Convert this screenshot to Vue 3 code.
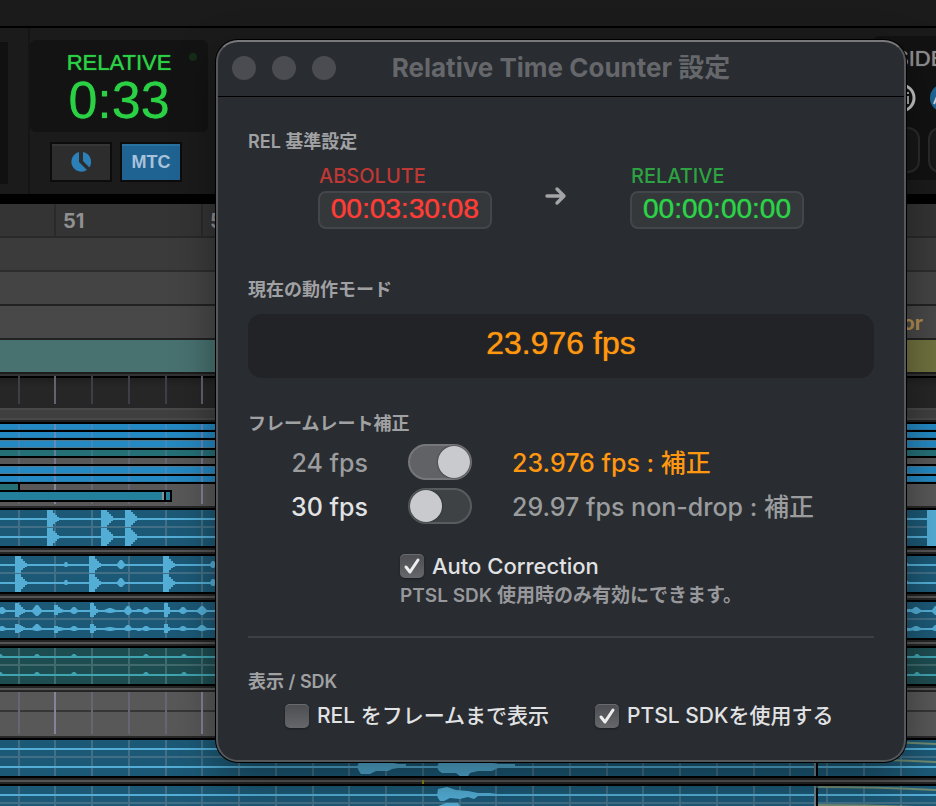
<script setup>
import { ref } from 'vue'

const absolute = ref('00:03:30:08')
const relative = ref('00:00:00:00')
const fix24 = ref(true)
const fix30 = ref(false)
const autoCorrection = ref(true)
const showFrames = ref(false)
const useSdk = ref(true)

// Beat positions across the timeline; every fourth one starts a bar.
const beats = Array.from({ length: 26 }, (_, i) => ({
  x: 18 + Math.floor(i * 36.75),
  bar: i % 4 === 1
}))

// Stepped outline of a hit: `hold` pixels at full level, then a decay to the right.
function hit(x, cy, up, down, hold, len) {
  const top = []
  const bottom = []
  for (let i = 0; i <= len; i += 2) {
    const t = i < hold ? 1 : Math.pow(1 - (i - hold) / (len - hold + 1), 1.5)
    const u = Math.round(up * t)
    const d = Math.round(down * t)
    top.push(`L${x + i} ${cy - u}H${x + i + 2}`)
    bottom.unshift(`L${x + i + 2} ${cy + d}H${x + i}`)
  }
  return `M${x} ${cy}${top.join('')}${bottom.join('')}Z`
}

// Small swell around x.
function swell(x, cy, up, down, w) {
  return `M${x - w} ${cy - 1}L${x - 1} ${cy - up}H${x + 1}L${x + w} ${cy - 1}V${cy + 1}L${x + 1} ${cy + down}H${x - 1}L${x - w} ${cy + 1}Z`
}

const drums = [[47, 12], [101, 14], [125, 14]]
  .flatMap(([x, l]) => [hit(x, 9, 9, 8, 4, l), hit(x, 27, 9, 9, 4, l)])
  .concat('M927 0H936V36H927Z')
  .join('')

const snare = [15, 89, 163]
  .flatMap((x) => [hit(x, 9, 9, 8, 4, 12), hit(x, 27, 9, 9, 4, 12)])
  .concat([[66, 3, 2], [121, 5, 4], [213, 4, 3], [907, 2, 1]].flatMap(([x, a, w]) => [swell(x, 9, a, a - 1, w), swell(x, 27, a, a - 1, w)]))
  .join('')

const hats = [
  [2, 4, 4], [37, 6, 5], [59, 3, 5], [74, 4, 4], [110, 3, 6], [128, 5, 4], [139, 2, 3], [146, 4, 4],
  [183, 4, 4], [202, 5, 5], [916, 4, 5], [909, 2, 4], [936, 5, 4]
].flatMap(([x, a, w]) => [swell(x, 9, a, a - 1, w), swell(x, 27, a - 1, 2, w)])
  .concat([[15, 8, 12], [54, 6, 8], [90, 8, 8], [164, 8, 6]].flatMap(([x, a, l]) => [hit(x, 9, a, a - 2, 2, l), hit(x, 27, a - 3, 4, 2, l)]))
  .join('')

const pads = [0, 37, 74, 146, 184, 917]
  .flatMap((x) => [swell(x, 9, 3, 1, 3), swell(x, 27, 3, 1, 3)])
  .join('')

const fxA = 'M357 27L360 20H380L398 24H406V28H398L392 29L388 31H376L370 34H361L359 31ZM437 27L440 20H480L498 24H515V28H498L492 31H478L470 33L468 36H460L456 33H442L439 31Z'
const fxB = 'M437 9L438 3L447 1L456 4L468 5L478 7H490L497 8V10H478L474 13L468 11L460 13L450 12L444 15H440L438 12ZM438 20L446 17H458L460 20Z'

const clips = [
  { kind: 'blue', tall: false }, { kind: 'blue', tall: false }, { kind: 'blue', tall: true },
  { kind: 'teal', tall: false }, { kind: 'empty', tall: false },
  { kind: 'blue', tall: true }, { kind: 'blue', tall: false }
]

const lanes = [
  { kind: 'audio', wave: drums },
  { kind: 'audio', wave: snare },
  { kind: 'audio', wave: hats },
  { kind: 'pad', wave: pads },
  { kind: 'blank', wave: '' },
  { kind: 'audio', wave: fxA, fade: 'M818 1Q880 1 936 4M818 19Q880 19 936 22', marker: true },
  { kind: 'audio', wave: fxB, fade: 'M818 1Q880 1 936 4M818 19Q880 19 936 22' }
]
</script>

<template>
  <div class="desktop">
    <div class="menubar"></div>

    <header class="toolbar">
      <div class="edge"></div>
      <section class="counter">
        <div class="display">
          <span class="led"></span>
          <div class="display-name">RELATIVE</div>
          <div class="display-time">0:33</div>
        </div>
        <div class="counter-buttons">
          <button class="tool" type="button" aria-label="Clock">
            <svg width="20" height="20" viewBox="0 0 20 20">
              <path d="M8 0V10L16 18A10 10 0 1 1 8 0Z" fill="#2b80b8" />
              <path d="M12 0A10 10 0 0 1 18.400 15.400L12 9Z" fill="#2b80b8" />
            </svg>
          </button>
          <button class="tool active" type="button">MTC</button>
        </div>
      </section>
      <section class="side">
        <div class="side-name">SIDE</div>
        <svg class="side-icons" width="66" height="32" viewBox="0 0 66 32">
          <circle cx="31" cy="16" r="13" fill="none" stroke="#c9c9c9" stroke-width="3" />
          <path d="M38 14V22M38 10V12" fill="none" stroke="#a9a9a9" stroke-width="2" />
          <circle cx="74" cy="16" r="14" fill="#1f6695" />
          <path d="M64 22L69 10" stroke="#c9d4dc" stroke-width="2" />
        </svg>
        <div class="side-slots"><span></span><span></span></div>
      </section>
    </header>

    <div class="ruler">
      <span class="pre"></span><span>51</span><span>52</span><span></span><span></span><span></span><span></span>
    </div>
    <div class="strip s1"></div>
    <div class="strip s2"></div>
    <div class="strip s3"><span>or</span></div>
    <div class="strip s4"><span></span></div>

    <div class="beats">
      <svg width="100%" height="28">
        <rect v-for="b in beats" :key="b.x" :x="b.x" y="0" width="2" height="28" :fill="b.bar ? '#656270' : '#403d49'" />
      </svg>
    </div>
    <div class="folder"></div>

    <div class="clips">
      <div v-for="(c, i) in clips" :key="i" class="clip" :class="[c.kind, { tall: c.tall }]">
        <svg width="100%" height="100%">
          <rect v-for="b in beats" :key="b.x" :x="b.x" y="0" width="2" height="8" fill="#8d88b8" :opacity="b.bar ? 0.6 : 0.25" />
        </svg>
      </div>
      <div class="group">
        <svg width="100%" height="22">
          <rect v-for="b in beats" :key="b.x" :x="b.x" y="0" width="2" height="20" :fill="b.bar ? '#85829a' : '#676473'" />
          <path d="M0 0H20V6H172V18H0Z" fill="#000" />
          <path d="M0 0H18V6H0Z" fill="#256f76" />
          <path d="M0 8H162V16H0ZM166 8H170V16H166Z" fill="#22809d" />
          <path d="M162 8H164V16H162Z" fill="#8a9398" />
        </svg>
      </div>
    </div>

    <div v-for="(l, i) in lanes" :key="i" class="lane" :class="l.kind">
      <svg class="lane-art" width="100%" height="100%">
        <template v-if="l.kind === 'blank'">
          <rect x="0" y="18" width="100%" height="2" fill="#363636" />
          <rect v-for="b in beats" :key="b.x" :x="b.x" y="0" width="2" height="42" :fill="b.bar ? '#85829a' : '#676473'" />
        </template>
        <template v-else>
          <rect v-for="b in beats" :key="b.x" :x="b.x" y="0" width="2" height="36" class="grid" />
          <rect x="0" y="16" width="100%" height="2" class="grid" />
          <rect x="0" y="8" width="100%" height="2" class="wave" />
          <rect x="0" y="26" width="100%" height="2" class="wave" />
          <path :d="l.wave" class="wave" />
        </template>
        <template v-if="l.fade">
          <path :d="l.fade" fill="none" stroke="#718b72" stroke-width="2" />
          <rect x="814" y="0" width="2" height="36" fill="#6d7f88" />
          <rect x="816" y="2" width="2" height="34" fill="#000" />
        </template>
      </svg>
      <div class="gap">
        <svg v-if="l.marker" width="100%" height="6"><rect x="422" y="2" width="2" height="4" fill="#8f8a10" /></svg>
      </div>
    </div>

    <main class="window" role="dialog" aria-labelledby="window-title">
      <header class="titlebar">
        <div class="lights"><span></span><span></span><span></span></div>
        <h1 id="window-title">Relative Time Counter 設定</h1>
      </header>

      <div class="body">
        <h2>REL 基準設定</h2>
        <div class="times">
          <div class="time red">
            <label for="abs">ABSOLUTE</label>
            <input id="abs" v-model="absolute" type="text" />
          </div>
          <svg class="arrow" width="22" height="20" viewBox="0 0 22 20">
            <path d="M2 10H19M12 3L19 10L12 17" fill="none" stroke="#a3a4a6" stroke-width="3.400" stroke-linecap="round" stroke-linejoin="round" />
          </svg>
          <div class="time green">
            <label for="rel">RELATIVE</label>
            <input id="rel" v-model="relative" type="text" />
          </div>
        </div>

        <h2 class="mode-title">現在の動作モード</h2>
        <div class="mode">23.976 fps</div>

        <h2 class="rate-title">フレームレート補正</h2>
        <div class="rates">
          <label class="rate dim" for="r24">24 fps</label>
          <input id="r24" v-model="fix24" class="switch" type="checkbox" role="switch" />
          <span class="result on">23.976 fps : 補正</span>
          <label class="rate" for="r30">30 fps</label>
          <input id="r30" v-model="fix30" class="switch" type="checkbox" role="switch" />
          <span class="result">29.97 fps non-drop : 補正</span>
        </div>

        <div class="auto">
          <label class="check">
            <span class="box">
              <input v-model="autoCorrection" type="checkbox" />
              <svg width="24" height="24" viewBox="0 0 24 24"><path d="M6 13L10 18L18 6" /></svg>
            </span>
            Auto Correction
          </label>
          <p>PTSL SDK 使用時のみ有効にできます。</p>
        </div>

        <hr />

        <h2>表示 / SDK</h2>
        <div class="options">
          <label class="check">
            <span class="box">
              <input v-model="showFrames" type="checkbox" />
              <svg width="24" height="24" viewBox="0 0 24 24"><path d="M6 13L10 18L18 6" /></svg>
            </span>
            REL をフレームまで表示
          </label>
          <label class="check">
            <span class="box">
              <input v-model="useSdk" type="checkbox" />
              <svg width="24" height="24" viewBox="0 0 24 24"><path d="M6 13L10 18L18 6" /></svg>
            </span>
            PTSL SDKを使用する
          </label>
        </div>
      </div>
    </main>
  </div>
</template>

<style>
body {
  margin: 0;
  background: #1b1b1b;
}
</style>

<style scoped>
* {
  box-sizing: border-box;
}

.desktop {
  position: relative;
  height: 100vh;
  overflow: hidden;
  background: #1b1b1b;
  font-family: Inter, "Noto Sans CJK JP", sans-serif;
}

svg {
  display: block;
}

.menubar {
  height: 28px;
  border-bottom: 2px solid #000;
}

/* Transport toolbar */
.toolbar {
  display: flex;
  height: 176px;
  border-bottom: 10px solid #000;
}

.edge {
  width: 30px;
  border-right: 2px solid #151515;
  background: linear-gradient(#111, #111) 0 14px / 8px 142px no-repeat;
}

.counter {
  width: 178px;
  padding-top: 12px;
}

.display {
  position: relative;
  height: 92px;
  padding-top: 8px;
  border-radius: 6px;
  background: #131313;
  color: #2bd144;
  font-family: "Liberation Sans", sans-serif;
  text-align: center;
  text-shadow: 0 0 1px currentColor;
}

.led {
  position: absolute;
  top: 13px;
  right: 11px;
  width: 8px;
  height: 8px;
  border-radius: 50%;
  background: #142c18;
}

.display-name {
  font-size: 22px;
  line-height: 30px;
}

.display-time {
  font-size: 52px;
  line-height: 44px;
}

.counter-buttons {
  display: flex;
  gap: 8px;
  padding: 10px 0 0 20px;
}

.tool {
  display: grid;
  place-items: center;
  width: 62px;
  height: 40px;
  padding: 0;
  border: 2px solid #0c0c0c;
  border-radius: 0;
  background: #2d2d2d;
  box-shadow: inset 0 2px #363636;
  color: #a9c2dc;
  font: 700 18px "Liberation Sans", sans-serif;
}

.tool.active {
  background: #1f6392;
  box-shadow: inset 0 2px #29719f;
}

.side {
  width: 66px;
  height: 144px;
  margin: 8px 0 0 auto;
  padding-top: 8px;
  overflow: hidden;
  border-top-left-radius: 10px;
  background: #121212;
}

.side-name {
  padding-left: 24px;
  color: #8f8f8f;
  font: 22px/30px "Liberation Sans", sans-serif;
  text-shadow: 0 0 1px currentColor;
}

.side-icons {
  margin-top: 8px;
}

.side-slots {
  display: flex;
  gap: 8px;
  margin-top: 13px;
}

.side-slots span {
  flex: none;
  width: 50px;
  height: 46px;
  border: 2px solid #2b2b2b;
  border-radius: 12px;
  background: #181818;
}

/* Timeline header */
.ruler {
  display: flex;
  height: 34px;
  overflow: hidden;
  border-bottom: 2px solid #292929;
  background: #343434;
}

.ruler span {
  flex: none;
  width: 147px;
  padding-left: 7px;
  border-left: 2px solid #2a2a2a;
  color: #909090;
  font: 700 20px/34px Inter, sans-serif;
}

.ruler .pre {
  width: 54px;
  border: 0;
}

.strip {
  display: flex;
  justify-content: flex-end;
  height: 34px;
  border-bottom: 2px solid #222;
}

.s1 {
  border-color: #2d2d2d;
  background: #3b3b3b;
}

.s2 {
  background: #444;
}

.s3 {
  padding-right: 13px;
  background: #484848;
  color: #b08d50;
  font: 700 20px/34px Inter, sans-serif;
}

.s4 {
  border-color: #1c1c1c;
  background: #487270;
}

.s4 span {
  width: 60px;
  background: #70713f;
}

.beats {
  height: 34px;
  border-top: 2px solid #333;
  background: linear-gradient(#000 2px, #1f1f1f 2px, #262626 10px);
}

.folder {
  height: 16px;
  border-bottom: 2px solid #000;
  background: linear-gradient(#484848 2px, #3f3f3f 2px 10px, #484848 10px 12px, #202020 12px);
}

/* Folded clip rows */
.clip {
  height: 8px;
  border-bottom: 2px solid #000;
  background: #585858;
}

.clip.blue {
  background: linear-gradient(#2488c2 5px, #287aa9 5px);
}

.clip.teal {
  background: #256f76;
}

.clip.tall {
  height: 10px;
  background: linear-gradient(#53798b 1px, #2488c2 1px 7px, #53798b 7px);
}

.group {
  height: 26px;
  border-bottom: 2px solid #000;
  background: linear-gradient(#585858 22px, #282828 22px);
}

/* Audio lanes */
.lane-art {
  height: 36px;
}

.audio .lane-art {
  background: #1c5976;
}

.pad .lane-art {
  background: #1e4d51;
}

.blank .lane-art {
  height: 44px;
  background: #585858;
}

.grid {
  fill: #426f86;
}

.wave {
  fill: #53add5;
}

.pad .grid {
  fill: #406a6d;
}

.pad .wave {
  fill: #40a3b0;
}

.gap {
  height: 10px;
  border: solid #000;
  border-width: 2px 0;
  background: linear-gradient(#252525 2px, #555 2px 4px, #252525 4px);
}

.pad .gap {
  height: 8px;
  border-bottom: 0;
}

.blank .gap {
  height: 4px;
  border-width: 0 0 2px;
  background: #282828;
}

/* Settings window */
.window {
  position: absolute;
  top: 40px;
  left: 216px;
  width: 690px;
  overflow: hidden;
  border: 2px solid #55585b;
  border-top-color: #77797b;
  border-radius: 22px;
  background: #292c31;
  box-shadow: 0 0 0 1px #000, 0 16px 44px rgba(0, 0, 0, 0.4);
  color: #e1e2e3;
}

.titlebar {
  display: grid;
  grid-template-columns: 1fr auto 1fr;
  align-items: center;
  height: 55px;
  padding: 0 14px 2px;
  border-bottom: 1px solid #000;
}

.lights {
  display: flex;
  gap: 16px;
}

.lights span {
  width: 24px;
  height: 24px;
  border-radius: 50%;
  background: #4a4c51;
}

h1 {
  margin: 0;
  color: #65676b;
  font-size: 26px;
  font-weight: 700;
  line-height: 32px;
}

.body {
  padding: 32px 30px;
}

h2 {
  margin: 0;
  color: #a0a1a3;
  font-size: 18px;
  font-weight: 600;
  line-height: 26px;
}

.times {
  display: flex;
  align-items: flex-end;
  justify-content: space-between;
  padding: 8px 70px 0;
}

.time {
  display: flex;
  flex-direction: column;
  gap: 2px;
}

.time label {
  padding-left: 1px;
  font-size: 20px;
  font-weight: 500;
  line-height: 26px;
}

.time input {
  width: 174px;
  height: 38px;
  padding: 0 0 2px;
  border: 2px solid #43464a;
  border-radius: 8px;
  outline: 0;
  background: #34383b;
  font: 28px "Liberation Sans", sans-serif;
  text-align: center;
  text-shadow: 0 0 1px currentColor;
}

.red label {
  color: #bf3834;
}

.red input {
  color: #ff3d36;
}

.green label {
  color: #2da342;
}

.green input {
  color: #2cd247;
}

.arrow {
  margin: 0 10px 23px 0;
}

.mode-title {
  margin-top: 48px;
}

.mode {
  height: 64px;
  margin-top: 11px;
  border-radius: 14px;
  background: #222326;
  color: #ff9710;
  font: 32px/58px "Liberation Sans", sans-serif;
  text-align: center;
  text-shadow: 0 0 1px currentColor;
}

.rate-title {
  margin-top: 33px;
}

.rates {
  display: grid;
  grid-template-columns: 120px 64px 1fr;
  gap: 8px 40px;
  align-items: center;
  margin-top: 7px;
  font-size: 25px;
  font-weight: 500;
  line-height: 34px;
  white-space: nowrap;
}

.rate,
.result {
  padding-top: 2px;
}

.rate {
  text-align: right;
}

.dim,
.result {
  color: #9b9c9e;
}

.result.on {
  color: #ff9710;
}

.switch {
  appearance: none;
  display: flex;
  width: 64px;
  height: 36px;
  margin: 0;
  padding: 0;
  border: 2px solid #585c5f;
  border-radius: 18px;
  background: #3e4245;
}

.switch::before {
  content: "";
  width: 32px;
  height: 32px;
  border-radius: 50%;
  background: #c9cacd;
  box-shadow: 0 0 2px #222;
}

.switch:checked {
  justify-content: flex-end;
  border-color: #76777a;
  background: #616266;
}

.auto {
  margin: 30px 0 0 152px;
}

.check {
  display: flex;
  align-items: center;
  gap: 8px;
  font-size: 22px;
  font-weight: 500;
  line-height: 24px;
  white-space: nowrap;
}

.box {
  display: grid;
}

.box > * {
  grid-area: 1 / 1;
}

.box input {
  appearance: none;
  width: 24px;
  height: 24px;
  margin: 0;
  border-radius: 5px;
  background: linear-gradient(#4b4d51, #66676b);
  box-shadow: inset 0 1px #696b6e, 0 1px 2px #1b1d20;
}

.box svg {
  visibility: hidden;
  pointer-events: none;
}

.box input:checked + svg {
  visibility: visible;
}

.box path {
  fill: none;
  stroke: #eee;
  stroke-width: 3;
  stroke-linecap: round;
  stroke-linejoin: round;
}

.auto p {
  margin: 5px 0 0;
  color: #97989b;
  font-size: 19px;
  font-weight: 600;
  line-height: 26px;
}

hr {
  height: 2px;
  margin: 27px 0 31px;
  border: 0;
  background: #3d4144;
}

.options {
  display: grid;
  grid-template-columns: 310px 1fr;
  margin-top: 9px;
  padding-left: 37px;
}

.options .check {
  font-size: 21px;
}
</style>
